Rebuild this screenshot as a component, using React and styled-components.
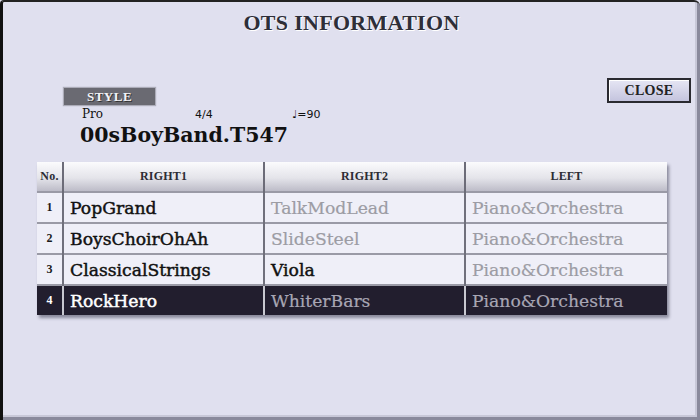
import React from 'react'
import styled, { createGlobalStyle } from 'styled-components';

const GlobalStyle = createGlobalStyle`
  body {
    margin: 0;
    background: #e0e0ef;
    font-family: "Liberation Serif", "Times New Roman", serif;
  }
`;

const Screen = styled.div`
  box-sizing: border-box;
  width: 700px;
  height: 420px;
  background: #e0e0ef;
  border-left: 3px solid #111;
  border-top: 2px solid #222;
  border-top-left-radius: 4px;
  border-top-right-radius: 6px;
  box-shadow: inset -3px -3px 0 #8a8a9c, inset -5px -5px 0 #c8c8d8;
  display: flex;
  flex-direction: column;
`;

const Title = styled.h1`
  margin: 9px 0 0 0;
  text-align: center;
  font-size: 22px;
  font-weight: bold;
  line-height: 24px;
  color: #2e2e38;
  text-shadow: 1px 1px 0 #ffffff;
  letter-spacing: 0.3px;
`;

const InfoBar = styled.div`
  display: flex;
  justify-content: space-between;
  align-items: flex-start;
  margin-top: 43px;
  padding: 0 9px 0 61px;
`;

const StyleBlock = styled.div`
  display: flex;
  flex-direction: column;
  margin-top: 10px;
`;

const StyleTag = styled.div`
  width: 91px;
  height: 17px;
  background: #6a6a72;
  box-shadow: 0 0 1px 1px rgba(120, 120, 130, 0.5);
  color: #f4f4f8;
  font-size: 13px;
  font-weight: bold;
  line-height: 17px;
  text-align: center;
  letter-spacing: 0.5px;
  text-shadow: 1px 1px 0 #333;
`;

const Meta = styled.div`
  display: flex;
  align-items: baseline;
  margin: 2px 0 0 18px;
  height: 14px;
  line-height: 14px;
  color: #111;
`;

const MetaItem = styled.span`
  width: ${p => p.w}px;
  font-family: ${p => (p.sans ? '"DejaVu Sans", "Liberation Sans", sans-serif' : '"DejaVu Serif", "Liberation Serif", serif')};
  font-size: ${p => (p.sans ? 11 : 12)}px;
`;

const StyleName = styled.div`
  margin: 0 0 0 16px;
  font-family: "DejaVu Serif", "Liberation Serif", serif;
  font-size: 20.5px;
  font-weight: bold;
  line-height: 28px;
  color: #111;
`;

const CloseButton = styled.button`
  width: 84px;
  height: 25px;
  padding: 0;
  border: 2px solid #2a2a30;
  background: linear-gradient(#e6e6f4, #c4c4de);
  box-shadow: inset 1px 1px 0 #ffffff;
  font-family: "Liberation Serif", "Times New Roman", serif;
  font-size: 14px;
  font-weight: bold;
  color: #222;
  letter-spacing: 0.3px;
  cursor: pointer;
`;

const TableWrap = styled.div`
  margin: 13px 0 0 34px;
  width: 630px;
  box-shadow: 2px 3px 3px rgba(30, 30, 50, 0.45);
`;

const Table = styled.table`
  width: 630px;
  border-collapse: collapse;
  table-layout: fixed;
`;

const HeadCell = styled.th`
  height: 29px;
  padding: 0;
  background: linear-gradient(#fbfbfd, #e4e4ea 55%, #bdbcc8);
  border-left: ${p => (p.first ? 'none' : '2px solid #6c6c78')};
  border-bottom: 1px solid #70707c;
  font-size: 12px;
  font-weight: bold;
  color: #2c2c34;
  letter-spacing: 0.2px;
  text-align: center;
`;

const Row = styled.tr`
  background: ${p => (p.selected ? '#221e2e' : '#efeff8')};
`;

const NumCell = styled.td`
  height: 29px;
  padding: 0;
  text-align: center;
  font-size: 12px;
  font-weight: bold;
  color: ${p => (p.selected ? '#ffffff' : '#1a1a1a')};
  border-top: 2px solid #9a9aa6;
`;

const Cell = styled.td`
  height: 29px;
  padding: 0 0 0 6px;
  border-left: 2px solid ${p => (p.selected ? '#c8c8d0' : '#70707c')};
  border-top: 2px solid #9a9aa6;
  font-family: "DejaVu Serif", "Liberation Serif", serif;
  font-size: 17.2px;
  white-space: nowrap;
  overflow: hidden;
  color: ${p => (p.dim ? (p.selected ? '#a8a6b4' : '#9c9ca4') : p.selected ? '#ffffff' : '#111111')};
  -webkit-text-stroke: ${p => (p.dim ? 0.2 : 0.45)}px currentColor;
`;

const rows = [
  { no: 1, right1: 'PopGrand', right2: 'TalkModLead', r2dim: true, left: 'Piano&Orchestra' },
  { no: 2, right1: 'BoysChoirOhAh', right2: 'SlideSteel', r2dim: true, left: 'Piano&Orchestra' },
  { no: 3, right1: 'ClassicalStrings', right2: 'Viola', r2dim: false, left: 'Piano&Orchestra' },
  { no: 4, right1: 'RockHero', right2: 'WhiterBars', r2dim: true, left: 'Piano&Orchestra', selected: true },
];

export default function App() {
  return (
    <Screen>
      <GlobalStyle />
      <Title>OTS INFORMATION</Title>
      <InfoBar>
        <StyleBlock>
          <StyleTag>STYLE</StyleTag>
          <Meta>
            <MetaItem w={113}>Pro</MetaItem>
            <MetaItem w={97} sans>4/4</MetaItem>
            <MetaItem sans>♩=90</MetaItem>
          </Meta>
          <StyleName>00sBoyBand.T547</StyleName>
        </StyleBlock>
        <CloseButton>CLOSE</CloseButton>
      </InfoBar>
      <TableWrap>
        <Table>
          <colgroup>
            <col style={{ width: 26 }} />
            <col style={{ width: 201 }} />
            <col style={{ width: 201 }} />
            <col style={{ width: 202 }} />
          </colgroup>
          <thead>
            <tr>
              <HeadCell first>No.</HeadCell>
              <HeadCell>RIGHT1</HeadCell>
              <HeadCell>RIGHT2</HeadCell>
              <HeadCell>LEFT</HeadCell>
            </tr>
          </thead>
          <tbody>
            {rows.map(r => (
              <Row key={r.no} selected={r.selected}>
                <NumCell selected={r.selected}>{r.no}</NumCell>
                <Cell selected={r.selected}>{r.right1}</Cell>
                <Cell selected={r.selected} dim={r.r2dim}>{r.right2}</Cell>
                <Cell selected={r.selected} dim>{r.left}</Cell>
              </Row>
            ))}
          </tbody>
        </Table>
      </TableWrap>
    </Screen>
  )
}
